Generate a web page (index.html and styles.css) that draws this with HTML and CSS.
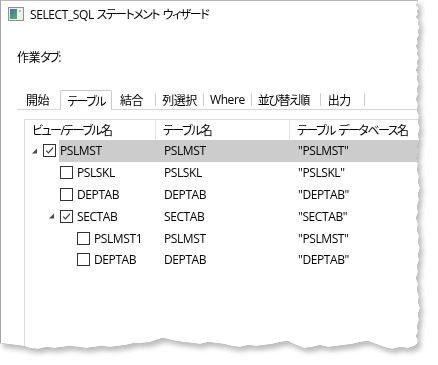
FILE: index.html
```html
<!DOCTYPE html>
<html lang="ja">
  <head>
    <meta charset="UTF-8" />
    <meta name="viewport" content="width=device-width, initial-scale=1.0" />
    <title>SELECT_SQL ステートメント ウィザード</title>
    <link rel="stylesheet" href="styles.css">
  </head>
  <body>
    <div class="paper">
      <div class="window">
        <div class="titlebar">
          <svg class="app-icon" width="16" height="14" viewBox="0 0 16 14">
            <defs>
              <linearGradient id="ico" x1="0" y1="0" x2="0.6" y2="1">
                <stop offset="0" stop-color="#3f74b0" />
                <stop offset="1" stop-color="#5ca865" />
              </linearGradient>
            </defs>
            <rect x="0.5" y="0.5" width="15" height="13" fill="#eef0f0" stroke="#8f9090" />
            <rect x="2" y="2" width="7" height="10" fill="url(#ico)" />
            <rect x="11" y="3" width="2" height="2" fill="#a7c9b3" />
          </svg>
          <span>SELECT_SQL <span class="ja">ステートメント ウィザード</span></span>
        </div>

        <div class="content">
          <div class="work-label">作業<span class="ja">タブ</span>:</div>

          <div class="tabs">
            <div class="tab">開始</div>
            <div class="tab selected"><span class="ja">テーブル</span></div>
            <div class="tab">結合</div>
            <span class="sep"></span>
            <div class="tab">列選択</div>
            <span class="sep"></span>
            <div class="tab">Where</div>
            <span class="sep"></span>
            <div class="tab sort"><span class="ja">並び替え順</span></div>
            <span class="sep"></span>
            <div class="tab last">出力</div>
            <span class="sep"></span>
          </div>

          <div class="grid">
            <div class="head"><span class="ja">ビュー/テーブル名</span></div>
            <div class="head"><span class="ja">テーブル名</span></div>
            <div class="head"><span class="ja">テーブル データベース名</span></div>

            <!-- level 0 -->
            <div class="cell tree lv0">
              <svg class="expander" width="11" height="6" viewBox="0 0 11 6"><path d="M5 0.5 L5 5.5 L0 5.5 Z" fill="#4a4a4a" /></svg>
              <span class="check on"><svg width="11" height="11" viewBox="0 0 11 11"><path d="M2.2 5.6 L4.4 7.8 L9 2.6" fill="none" stroke="#3a3a3a" stroke-width="1.2" /></svg></span>
              <span class="name sel">PSLMST</span>
            </div>
            <div class="cell sel">PSLMST</div>
            <div class="cell sel">"PSLMST"</div>

            <div class="cell tree lv1">
              <span class="expander"></span>
              <span class="check"></span>
              <span class="name">PSLSKL</span>
            </div>
            <div class="cell">PSLSKL</div>
            <div class="cell">"PSLSKL"</div>

            <div class="cell tree lv1">
              <span class="expander"></span>
              <span class="check"></span>
              <span class="name">DEPTAB</span>
            </div>
            <div class="cell">DEPTAB</div>
            <div class="cell">"DEPTAB"</div>

            <div class="cell tree lv1">
              <svg class="expander" width="11" height="6" viewBox="0 0 11 6"><path d="M5 0.5 L5 5.5 L0 5.5 Z" fill="#4a4a4a" /></svg>
              <span class="check on"><svg width="11" height="11" viewBox="0 0 11 11"><path d="M2.2 5.6 L4.4 7.8 L9 2.6" fill="none" stroke="#3a3a3a" stroke-width="1.2" /></svg></span>
              <span class="name">SECTAB</span>
            </div>
            <div class="cell">SECTAB</div>
            <div class="cell">"SECTAB"</div>

            <div class="cell tree lv2">
              <span class="expander"></span>
              <span class="check"></span>
              <span class="name">PSLMST1</span>
            </div>
            <div class="cell">PSLMST</div>
            <div class="cell">"PSLMST"</div>

            <div class="cell tree lv2">
              <span class="expander"></span>
              <span class="check"></span>
              <span class="name">DEPTAB</span>
            </div>
            <div class="cell">DEPTAB</div>
            <div class="cell">"DEPTAB"</div>
          </div>
        </div>
      </div>
    </div>
  </body>
</html>
```

FILE: styles.css
```css
* {
  box-sizing: border-box;
}

body {
  margin: 0;
  background-color: #ffffff;
  font-family: "Open Sans", "Noto Sans CJK JP", sans-serif;
  font-size: 12px;
  letter-spacing: -0.4px;
  color: #111;
  font-feature-settings: "palt";
}

/* kana runs: the original UI font is narrower than Noto CJK */
.ja {
  letter-spacing: -1.5px;
  word-spacing: 2px;
}

/* torn paper look: outline + soft shadow around the clipped window */
.paper {
  width: 430px;
  height: 360px;
  filter: drop-shadow(0.8px 0 0 #9c9c9c) drop-shadow(0 0.8px 0 #9c9c9c)
    drop-shadow(3px 4px 2.5px rgba(0, 0, 0, 0.26));
}

.window {
  width: 424px;
  height: 352px;
  background-color: #fff;
  border-left: 1px solid #a4a4a4;
  border-top: 1px solid #b8b8b8;
  overflow: hidden;
  clip-path: polygon(
    0 0, 417px 0, 418px 3px, 416px 5px, 419px 8px, 417px 11px, 418px 14px,
    416px 17px, 419px 20px, 418px 24px, 420px 27px, 418px 31px, 419px 35px,
    417px 39px, 418px 43px, 416px 46px, 418px 50px, 417px 54px, 419px 58px,
    417px 62px, 418px 66px, 416px 70px, 418px 74px, 417px 79px, 419px 84px,
    417px 89px, 418px 94px, 416px 99px, 418px 104px, 417px 110px, 419px 116px,
    418px 122px, 420px 128px, 418px 134px, 419px 140px, 417px 146px,
    418px 152px, 416px 158px, 418px 164px, 417px 170px, 419px 176px,
    418px 182px, 420px 188px, 418px 194px, 419px 200px, 417px 206px,
    418px 212px, 416px 218px, 418px 224px, 417px 230px, 419px 236px,
    418px 242px, 420px 248px, 418px 254px, 419px 260px, 417px 266px,
    418px 272px, 416px 278px, 418px 284px, 417px 290px, 419px 296px,
    418px 302px, 420px 308px, 418px 314px, 419px 320px, 417px 326px,
    418px 332px, 416px 336px, 418px 340px, 417px 344px,
    414px 346px, 408px 348px, 400px 347px, 392px 349px, 384px 347px,
    376px 344px, 368px 341px, 360px 342px, 352px 344px, 344px 345px,
    336px 346px, 328px 347px, 320px 345px, 312px 347px, 304px 348px,
    296px 345px, 288px 341px, 280px 342px, 272px 344px, 264px 345px,
    256px 346px, 248px 345px, 240px 347px, 232px 346px, 224px 344px,
    216px 343px, 208px 342px, 200px 344px, 192px 343px, 184px 342px,
    176px 341px, 168px 339px, 162px 338px, 156px 340px, 150px 342px,
    142px 343px, 134px 343px, 126px 345px, 118px 346px, 110px 347px,
    102px 346px, 94px 347px, 86px 348px, 78px 347px, 70px 346px,
    62px 347px, 54px 348px, 46px 347px, 38px 349px, 30px 348px,
    24px 346px, 16px 345px, 8px 344px, 0 343px
  );
}

.titlebar {
  display: flex;
  align-items: center;
  gap: 6px;
  height: 26px;
  padding-left: 7px;
  color: #000;
}

.app-icon {
  display: block;
}

.content {
  padding-left: 16px;
}

.work-label {
  margin-top: 23px;
  line-height: 16px;
  color: #000;
}

.tabs {
  display: flex;
  align-items: stretch;
  height: 20px;
  margin-top: 24px;
  border-bottom: 1px solid #d6d6d6;
}

.tab {
  display: flex;
  align-items: center;
  padding: 0 6px;
  color: #000;
}

.tab:first-child {
  padding-left: 9px;
  padding-right: 11px;
}

.tab.selected {
  padding: 0 6px;
  margin-bottom: -1px;
  background-color: #fff;
  border: 1px solid #cbcbcb;
  border-bottom: 0;
  border-radius: 2px 2px 0 0;
}

.tab.selected + .tab {
  padding-left: 8px;
  padding-right: 12px;
}

.tab.sort {
  padding-right: 11px;
}

.tab.last {
  padding-left: 7px;
  padding-right: 13px;
}

.sep {
  align-self: center;
  width: 1px;
  height: 13px;
  background-color: #cfcfcf;
}

.grid {
  display: grid;
  grid-template-columns: 131px 134px 1fr;
  grid-auto-rows: 21.8px;
  grid-template-rows: 20px;
  width: 420px;
  height: 240px;
  margin-top: 9px;
  margin-left: 7px;
  border-left: 1px solid #dcdcdc;
  border-top: 1px solid #dcdcdc;
  align-content: start;
}

.head {
  display: flex;
  align-items: center;
  padding-left: 7px;
  border-right: 1px solid #e3e3e3;
  color: #000;
  white-space: nowrap;
}

.cell {
  display: flex;
  align-items: center;
  padding-left: 7px;
  color: #000;
  white-space: nowrap;
}

.cell + .cell:not(.tree) {
  padding-left: 8px;
}

.cell.sel {
  background-color: #cccccc;
}

.tree {
  padding-left: 7px;
}

.tree.lv1 {
  padding-left: 24px;
}

.tree.lv2 {
  padding-left: 41px;
}

.expander {
  display: block;
  flex: none;
  width: 11px;
}

.check {
  display: flex;
  align-items: center;
  justify-content: center;
  flex: none;
  width: 13px;
  height: 13px;
  border: 1px solid #333;
  background-color: #fff;
  margin-right: 3px;
}

.check svg {
  display: block;
}

.name {
  align-self: stretch;
  display: flex;
  align-items: center;
  flex: 1;
  padding-left: 1px;
}

.name.sel {
  background-color: #cccccc;
}
```
